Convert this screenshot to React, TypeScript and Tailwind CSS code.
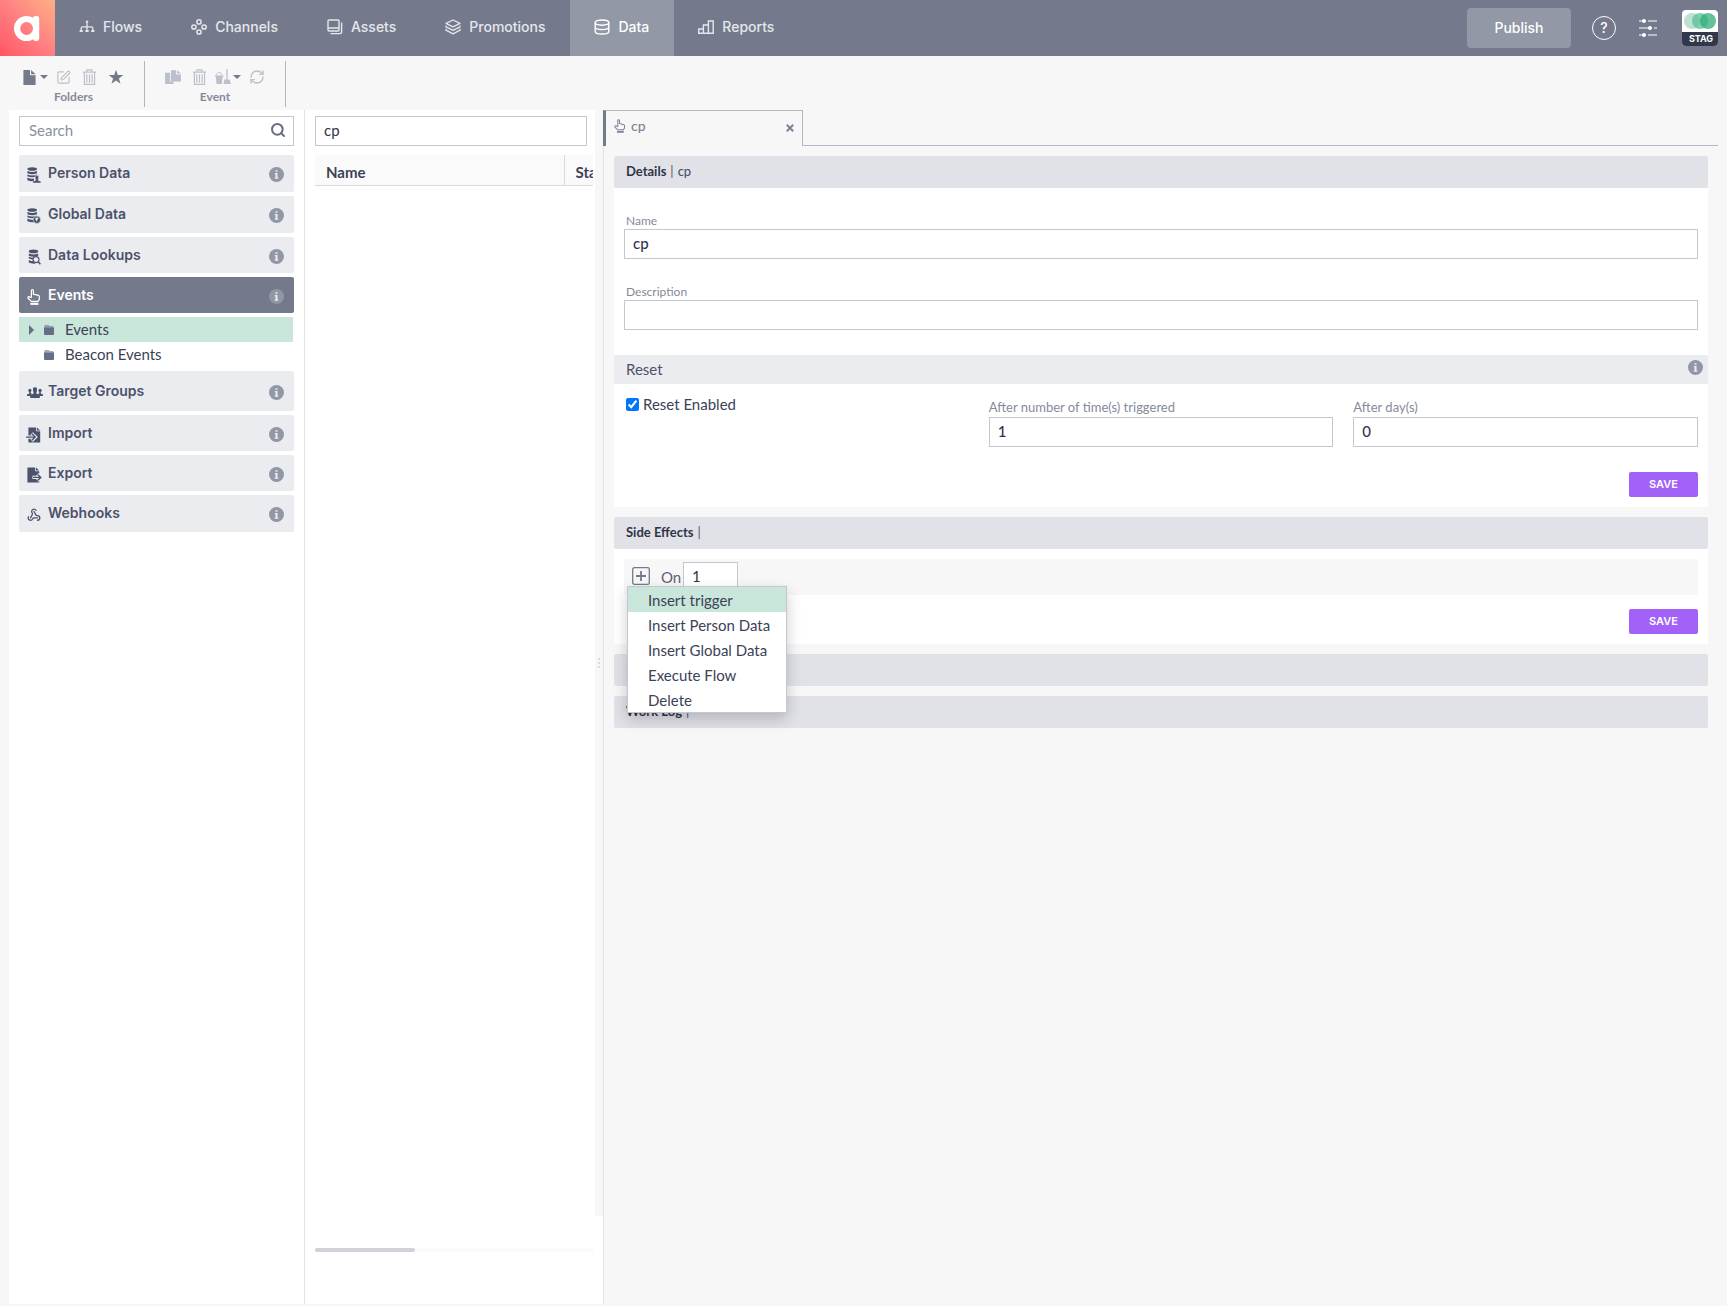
import { useState } from 'react';
import type { ReactNode } from 'react';
import { RefreshCw, Search, SquarePen, Webhook } from 'lucide-react';

type IconProps = { className?: string };

function FlowsIcon() {
  return (
    <svg className="size-4" viewBox="0 0 16 16" fill="none" stroke="currentColor" strokeWidth="1.3">
      <path d="M8 3v9M2.2 11.6V9q0-1.2 1.2-1.2h9.2q1.2 0 1.2 1.2v2.6" />
      <path d="M6.8 2.6h2.4M.6 12h3.2M6.4 12h3.2M12.2 12h3.2" strokeWidth="1.8" />
    </svg>
  );
}

function ChannelsIcon() {
  return (
    <svg className="size-4" viewBox="0 0 16 16" fill="none" stroke="currentColor" strokeWidth="1.5">
      <circle cx="8" cy="2.9" r="2.1" />
      <circle cx="8" cy="13" r="2.1" />
      <circle cx="2.9" cy="8" r="2.1" />
      <circle cx="13.1" cy="8" r="2.1" />
    </svg>
  );
}

function AssetsIcon() {
  return (
    <svg className="size-4" viewBox="0 0 16 16" fill="none" stroke="currentColor" strokeWidth="1.4">
      <rect x="1" y="1" width="11" height="11" rx="1" />
      <path d="M1 9h11M14.6 3.5v9.6q0 1.5-1.5 1.5H3.5" />
    </svg>
  );
}

function PromotionsIcon() {
  return (
    <svg className="size-4" viewBox="0 0 16 16" fill="none" stroke="currentColor" strokeWidth="1.3" strokeLinejoin="round">
      <path d="M8 1l7 3.4-7 3.4-7-3.4z" />
      <path d="M1 6.4v1.4l7 3.5 7-3.5V6.4M1 9.8v1.4l7 3.6 7-3.6V9.8" />
    </svg>
  );
}

function DataIcon() {
  return (
    <svg className="size-4" viewBox="0 0 16 16" fill="none" stroke="currentColor" strokeWidth="1.4">
      <ellipse cx="8" cy="3.6" rx="6.8" ry="2.6" />
      <path d="M1.2 3.6v8.8c0 1.4 3 2.6 6.8 2.6s6.8-1.2 6.8-2.6V3.6M1.2 8C1.2 9.4 4.2 10.6 8 10.6s6.8-1.2 6.8-2.6" />
    </svg>
  );
}

function ReportsIcon() {
  return (
    <svg className="size-4" viewBox="0 0 16 16" fill="none" stroke="currentColor" strokeWidth="1.4">
      <path d="M.8 14V10h4.6v4M5.4 14V6h5v8M10.4 14V2h4.8v12M0 14.2h16" />
    </svg>
  );
}

function FileIcon({ className }: IconProps) {
  return (
    <svg className={className} viewBox="0 0 13 16" fill="currentColor">
      <path d="M0 0h7v5.5h6V16H0zM8.2 0L13 4.4H8.2z" />
    </svg>
  );
}

function TrashIcon({ className }: IconProps) {
  return (
    <svg className={className} viewBox="0 0 13 16" fill="none" stroke="currentColor" strokeWidth="1.2">
      <path d="M0 3.2h13M4 3V.8h5V3M1.4 3.4v11.9h10.2V3.4M3.8 5.2v8.6M6.5 5.2v8.6M9.2 5.2v8.6" />
    </svg>
  );
}

function StarIcon({ className }: IconProps) {
  return (
    <svg className={className} viewBox="0 0 16 16" fill="currentColor">
      <path d="M8 .8l1.8 5.3h5.5l-4.4 3.3 1.6 5.4L8 11.6l-4.5 3.2 1.6-5.4L.7 6.1h5.5z" />
    </svg>
  );
}

function CopyIcon({ className }: IconProps) {
  return (
    <svg className={className} viewBox="0 0 16 16" fill="currentColor">
      <path d="M0 3.8h5.2v8.8h3.4V15H0z" />
      <path d="M6 1.2h5.2v4.2H16v7H6zM12.2 1.2L16 4.6h-3.8z" />
    </svg>
  );
}

function CleanIcon({ className }: IconProps) {
  return (
    <svg className={className} viewBox="0 0 16 16" fill="currentColor">
      <path d="M0 6.4h8.4v1.4h-.7L6.8 15H1.6L.7 7.8H0zM11.3 0h1.3v10.4h-1.3zM9.4 10.6h5.2L16 15H8.4z" />
      <path d="M1.4 6.4C1.6 2.6 6.8 2.6 7 6.4" fill="none" stroke="currentColor" />
    </svg>
  );
}

function Caret() {
  return (
    <svg className="h-1 w-2" viewBox="0 0 8 4" fill="currentColor">
      <path d="M0 0h8L4 4z" />
    </svg>
  );
}

function PointerIcon({ className }: IconProps) {
  return (
    <svg className={className} viewBox="0 0 14 16" fill="none" stroke="currentColor" strokeWidth="1.2" strokeLinejoin="round">
      <path d="M4.4 8.8V1.5q0-.9 1-.9t1 .9v3.7l5 1.2q.9.3.9 1.2v2.8l-1.3 2H4.4L1 9.2Q.6 7.8 2 7.6l2.4 1.2" />
      <path d="M3.4 14.8h8" strokeWidth="2.2" />
    </svg>
  );
}

function DbLayers() {
  return (
    <>
      <ellipse cx="5.2" cy="2" rx="4.8" ry="1.8" />
      <path d="M.4 4.1q4.8 2 9.6 0v2.2q-4.8 2-9.6 0zM.4 7.4q4.8 2 9.6 0v1.8q-4.8 2-9.6 0zM.4 10.6q3.4 1.8 6.6 1v2.6q-3.6.4-6.6-1z" />
    </>
  );
}

function PersonDataIcon() {
  return (
    <svg className="h-4 w-[14px]" viewBox="0 0 14 16" fill="currentColor">
      <DbLayers />
      <path d="M8.2 8.6h3.4v3.2l-.6 1.4 3 1.2V16H5.8v-1.6l3-1.2-.6-1.4z" stroke="#ebecf0" strokeWidth=".5" />
    </svg>
  );
}

function GlobalDataIcon() {
  return (
    <svg className="h-4 w-[14px]" viewBox="0 0 14 16" fill="currentColor">
      <DbLayers />
      <circle cx="9.9" cy="11.7" r="3.7" stroke="#ebecf0" strokeWidth=".6" />
      <path d="M8.2 10.2l2-1 1.4 1.6-1.4 1-.2 2-1.2-1.6z" fill="#ebecf0" />
    </svg>
  );
}

function LookupIcon() {
  return (
    <svg className="h-4 w-[14px]" viewBox="0 0 14 16" fill="currentColor">
      <g transform="translate(1.4 .4) scale(.98 1)">
        <DbLayers />
      </g>
      <circle cx="9" cy="10.6" r="3" fill="#ebecf0" stroke="currentColor" strokeWidth="1.1" />
      <path d="M11.2 12.8l2.2 2.4" stroke="currentColor" strokeWidth="1.6" />
    </svg>
  );
}

function GroupsIcon() {
  return (
    <svg className="h-[11px] w-4" viewBox="0 0 16 11" fill="currentColor">
      <circle cx="2.9" cy="3.4" r="1.6" />
      <circle cx="13.1" cy="3.4" r="1.6" />
      <path d="M0 9V7.4l2.2-1V4.6h1.6v1.8l1.4.4L3.8 9zM16 9V7.4l-2.2-1V4.6h-1.6v1.8l-1.4.4L12.2 9z" />
      <path d="M6 1.6Q6.2.2 8 .2t2 1.4v2.2L9.4 5.6v1l3.4 1.8V11H3.2V8.4l3.4-1.8v-1L6 3.8z" />
    </svg>
  );
}

function ImportIcon() {
  return (
    <svg className="-ml-px h-4 w-[15px]" viewBox="0 0 15 16" fill="currentColor">
      <path d="M2.4.4h7.8v3.8h4v11.4H2.4zM11 .4l3.2 3.2H11z" />
      <path d="M0 10.1h8M5.6 6.4l3.8 3.7-3.8 3.7" fill="none" stroke="#ebecf0" strokeWidth="3.4" />
      <path d="M0 10.1h8.6M5.6 6.6l3.6 3.5-3.6 3.5" fill="none" stroke="currentColor" strokeWidth="1.4" />
    </svg>
  );
}

function ExportIcon() {
  return (
    <svg className="h-4 w-[15px]" viewBox="0 0 15 16" fill="currentColor">
      <path d="M.4.4h7.8v3.8h4v11.4H.4zM9 .4l3.2 3.2H9z" />
      <path d="M5.4 10.4h8M10.4 7.2l3.4 3.2-3.4 3.2" fill="none" stroke="#ebecf0" strokeWidth="3.4" />
      <path d="M6 10.4h7.4M10.6 7.4l3.2 3-3.2 3" fill="none" stroke="currentColor" strokeWidth="1.4" />
    </svg>
  );
}

function InfoIcon({ className }: IconProps) {
  return (
    <svg className={`size-[15px] shrink-0 ${className ?? ''}`} viewBox="0 0 15 15" fill="#9297a6">
      <circle cx="7.5" cy="7.5" r="7.5" />
      <path d="M6.5 3.2h2v1.6h-2zM5.8 6h2.7v4.6h.8v1.2H5.7v-1.2h.8V7.2h-.7z" fill="#ebecf0" />
    </svg>
  );
}

function FolderIcon() {
  return (
    <svg className="h-[10px] w-[10px]" viewBox="0 0 10 10" fill="#666d86">
      <path d="M1 0h3.6l1 1h3.6v1H0z" opacity=".6" />
      <path d="M0 2.2h10V9q0 1-1 1H1q-1 0-1-1z" />
    </svg>
  );
}

const navItems = [
  { label: 'Flows', icon: <FlowsIcon /> },
  { label: 'Channels', icon: <ChannelsIcon /> },
  { label: 'Assets', icon: <AssetsIcon /> },
  { label: 'Promotions', icon: <PromotionsIcon /> },
  { label: 'Data', icon: <DataIcon /> },
  { label: 'Reports', icon: <ReportsIcon /> },
];

const menuItems = ['Insert trigger', 'Insert Person Data', 'Insert Global Data', 'Execute Flow', 'Delete'];

const fieldClass = 'h-[30px] w-full border border-[#c5c6d2] bg-white px-2 pb-[2px] text-[15px] text-[#2f3547] outline-none focus:border-[#757a8c]';

function TopNav() {
  return (
    <header className="flex h-14 items-stretch bg-[#747a8c] font-['Inter',sans-serif]">
      <a href="#home" aria-label="Home" className="w-[55px] shrink-0 bg-linear-to-tr from-[#ff5563] via-[#ff7f82] to-[#fbb086]">
        <svg className="h-14 w-[55px]" viewBox="0 0 55 56" fill="none">
          <circle cx="26.6" cy="28.5" r="9.5" stroke="#fff" strokeWidth="6.2" />
          <rect x="33" y="16" width="6.2" height="25" rx="2.4" fill="#fff" />
        </svg>
      </a>
      <nav className="flex">
        {navItems.map((item) => (
          <a
            key={item.label}
            href={`#${item.label.toLowerCase()}`}
            className={`flex items-center gap-2 pr-[25px] pb-[2px] pl-6 text-sm font-medium ${item.label === 'Data' ? 'bg-[#9298a6] text-white' : 'text-[#e6e7ec]'}`}
          >
            {item.icon}
            {item.label}
          </a>
        ))}
      </nav>
      <div className="ml-auto flex items-center pr-[9px]">
        <button className="h-10 w-26 rounded-sm bg-[#9298a6] pb-px text-sm font-medium text-white">Publish</button>
        <button aria-label="Help" className="ml-[21px] flex size-6 items-center justify-center rounded-full border border-white text-sm font-medium text-white">
          ?
        </button>
        <button aria-label="Settings" className="ml-[22px] text-white">
          <svg className="size-5" viewBox="0 0 20 20" fill="currentColor">
            <path d="M1 3h5M10 3h9M1 10h10M16 10h3M1 17h5M10 17h9" stroke="currentColor" strokeWidth="1.2" />
            <circle cx="6" cy="3" r="2" />
            <circle cx="12" cy="10" r="2" />
            <circle cx="6" cy="17" r="2" />
          </svg>
        </button>
        <div className="ml-6 w-9 overflow-hidden rounded-sm bg-white">
          <svg className="h-[22px] w-9" viewBox="0 0 36 22">
            <circle cx="10" cy="11" r="8" fill="#bfe0d3" />
            <circle cx="18" cy="11" r="8" fill="#57bf97" opacity=".75" />
            <circle cx="26" cy="11" r="8" fill="#2fac7a" opacity=".75" />
          </svg>
          <p className="h-[14px] bg-[#323849] pl-[2px] text-center text-[9px] leading-[14px] font-bold text-white">STAG</p>
        </div>
      </div>
    </header>
  );
}

function ToolGroup({ label, children }: { label: string; children: ReactNode }) {
  return (
    <div className="flex h-[46px] flex-col items-center border-r border-[#b3b7c4] px-5 pt-2">
      <div className="flex h-4 items-center text-[#bcc0ca]">{children}</div>
      <p className="mt-1 text-xs leading-4 font-bold text-[#858a9b]">{label}</p>
    </div>
  );
}

function Toolbar() {
  return (
    <div className="flex h-[54px] pt-[5px] pl-[3px]">
      <ToolGroup label="Folders">
        <button aria-label="New folder" className="flex items-center gap-1 text-[#747a8c]">
          <FileIcon className="h-[15px] w-[13px]" />
          <Caret />
        </button>
        <button aria-label="Rename folder" className="ml-2"><SquarePen size={15} strokeWidth={1.8} /></button>
        <button aria-label="Delete folder" className="ml-3"><TrashIcon className="h-4 w-[13px]" /></button>
        <button aria-label="Favourite" className="ml-3 text-[#747a8c]"><StarIcon className="size-4" /></button>
      </ToolGroup>
      <ToolGroup label="Event">
        <button aria-label="Duplicate event"><CopyIcon className="size-4" /></button>
        <button aria-label="Delete event" className="ml-3"><TrashIcon className="h-4 w-[13px]" /></button>
        <button aria-label="Clean up" className="ml-[9px] flex items-center gap-[2px]">
          <CleanIcon className="size-4" />
          <span className="text-[#747a8c]"><Caret /></span>
        </button>
        <button aria-label="Refresh" className="ml-2"><RefreshCw size={16} strokeWidth={2} /></button>
      </ToolGroup>
    </div>
  );
}

function SideItem({ label, icon, height, active }: { label: string; icon: ReactNode; height: string; active?: boolean }) {
  return (
    <button
      className={`flex w-full items-center rounded-xs pr-[10px] pb-px pl-2 font-['Inter',sans-serif] text-sm ${height} ${active ? 'bg-[#747a8c] text-white' : 'bg-[#ebecf0] text-[#4b526a]'}`}
    >
      <span className="flex w-[21px] items-center pt-1">{icon}</span>
      <span className="font-semibold">{label}</span>
      <InfoIcon className="mt-[3px] ml-auto" />
    </button>
  );
}

function Sidebar() {
  return (
    <aside className="w-74 shrink-0 border-r border-[#e2e3e7] bg-white px-[10px] pt-[6px]">
      <div className="flex h-[30px] items-center border border-[#c5c6d2] pr-[7px] pb-[2px]">
        <input aria-label="Search" placeholder="Search" className="h-full min-w-0 flex-1 px-[9px] text-[15px] outline-none placeholder:text-[#8b90a0]" />
        <button aria-label="Run search" className="text-[#666d86]"><Search size={16} strokeWidth={3} /></button>
      </div>
      <div className="mt-[9px] flex flex-col gap-1">
        <SideItem label="Person Data" icon={<PersonDataIcon />} height="h-[37px]" />
        <SideItem label="Global Data" icon={<GlobalDataIcon />} height="h-[37px]" />
        <SideItem label="Data Lookups" icon={<LookupIcon />} height="h-9" />
        <SideItem label="Events" icon={<PointerIcon className="h-4 w-[14px]" />} height="h-9" active />
        <ul className="text-[15px] leading-[25px] text-[#3c4257]">
          <li className="mr-px flex h-[25px] items-center bg-[#c9e6da] pl-[10px]">
            <svg className="h-[10px] w-[5px]" viewBox="0 0 5 10" fill="#666d86"><path d="M0 0l5 5-5 5z" /></svg>
            <a href="#events" className="ml-[10px] flex items-center gap-[11px]"><FolderIcon />Events</a>
          </li>
          <li className="flex h-[25px] items-center pl-[25px]">
            <a href="#beacon" className="flex items-center gap-[11px]"><FolderIcon />Beacon Events</a>
          </li>
        </ul>
        <SideItem label="Target Groups" icon={<GroupsIcon />} height="h-10" />
        <SideItem label="Import" icon={<ImportIcon />} height="h-9" />
        <SideItem label="Export" icon={<ExportIcon />} height="h-9" />
        <SideItem label="Webhooks" icon={<Webhook size={14} strokeWidth={2.2} />} height="h-[37px]" />
      </div>
    </aside>
  );
}

function EventList() {
  return (
    <section className="flex w-[298px] shrink-0 bg-white">
      <div className="flex min-w-0 flex-1 flex-col pt-[6px] pr-[2px] pl-[10px]">
        <div className="pr-[6px]">
          <input aria-label="Filter events" defaultValue="cp" className={fieldClass} />
        </div>
        <div className="mt-[9px] flex-1 overflow-hidden">
          <table className="w-[420px] table-fixed text-left text-[15px] text-[#3c4257]">
            <thead>
              <tr className="h-[30px] border-b border-[#d9dade] bg-[#fafafa]">
                <th className="w-[249px] border-r border-[#d9dade] pt-1 pl-[11px] leading-5 font-bold">Name</th>
                <th className="pt-1 pl-[11px] leading-5 font-bold">Status</th>
              </tr>
            </thead>
          </table>
        </div>
        <div className="mb-[52px] h-1 bg-[#fafafc]">
          <div className="h-1 w-25 rounded-full bg-[#cfd2d9]" />
        </div>
      </div>
      <div className="mb-[88px] flex w-2 flex-col items-center justify-center gap-[2px] bg-[#f7f7f7]">
        <span className="size-[2px] bg-[#d9dade]" />
        <span className="size-[2px] bg-[#d9dade]" />
        <span className="size-[2px] bg-[#d9dade]" />
      </div>
    </section>
  );
}

function PanelHeader({ title, value }: { title?: string; value?: string }) {
  return (
    <h2 className="flex h-8 items-center gap-1 rounded-xs bg-[#e1e2e8] px-3 text-[13px] text-[#4b526a]">
      {title && <span className="font-bold text-[#2f3547]">{title}</span>}
      <span>|</span>
      {value && <span className="font-medium">{value}</span>}
    </h2>
  );
}

function SaveButton() {
  return (
    <button className="h-[25px] w-[69px] rounded-xs bg-[#a262f7] font-['Inter',sans-serif] text-[11px] font-semibold text-white hover:bg-[#9150ea]">
      SAVE
    </button>
  );
}

function Field({ id, label, value, labelClass }: { id: string; label: string; value?: string; labelClass: string }) {
  return (
    <div>
      <label htmlFor={id} className={`block h-[18px] text-[#858a9b] ${labelClass}`}>{label}</label>
      <input id={id} defaultValue={value} className={`${fieldClass} font-medium`} />
    </div>
  );
}

function EventEditor() {
  const [menuOpen, setMenuOpen] = useState(true);
  const [resetEnabled, setResetEnabled] = useState(true);

  return (
    <section className="flex min-w-0 flex-1 flex-col">
      <div className="mr-[9px] flex h-9">
        <div className="flex w-50 items-center border-t border-r border-l-3 border-[#b3b7c4] border-l-[#747a8c] px-2 pb-[6px] text-[#7d8396]">
          <PointerIcon className="h-[14px] w-3" />
          <span className="ml-[5px] text-sm font-medium">cp</span>
          <button aria-label="Close tab" className="mt-1 ml-auto">
            <svg className="size-2" viewBox="0 0 8 8" stroke="currentColor" strokeWidth="2"><path d="M.8.8l6.4 6.4M7.2.8L.8 7.2" /></svg>
          </button>
        </div>
        <div className="flex-1 border-b border-[#b3b7c4]" />
      </div>

      <div className="flex flex-1 flex-col gap-[10px] border-l border-[#e2e3e7] pt-[10px] pr-[19px] pl-[10px]">
        <div className="bg-white">
          <PanelHeader title="Details" value="cp" />
          <div className="flex flex-col gap-[23px] px-[10px] pt-[23px] pb-[25px]">
            <Field id="event-name" label="Name" value="cp" labelClass="pl-[2px] text-xs leading-5" />
            <Field id="event-description" label="Description" labelClass="pl-[2px] text-xs leading-5" />
          </div>
          <div className="flex h-[29px] items-center justify-between bg-[#ebecf0] pr-[5px] pl-3">
            <h3 className="text-[15px] text-[#4b526a]">Reset</h3>
            <InfoIcon className="mb-1" />
          </div>
          <div className="p-[10px]">
            <div className="grid grid-cols-3 gap-5">
              <label className="flex h-5 items-center gap-1 pl-[2px] text-[15px] text-[#3c4257]">
                <input
                  type="checkbox"
                  checked={resetEnabled}
                  onChange={(event) => setResetEnabled(event.target.checked)}
                  className="size-[13px] accent-[#0075ff]"
                />
                Reset Enabled
              </label>
              <div className="pt-[5px]">
                <Field id="reset-times" label="After number of time(s) triggered" value="1" labelClass="text-[13px] leading-4" />
              </div>
              <div className="pt-[5px]">
                <Field id="reset-days" label="After day(s)" value="0" labelClass="text-[13px] leading-4" />
              </div>
            </div>
            <div className="mt-[25px] flex justify-end"><SaveButton /></div>
          </div>
        </div>

        <div className="bg-white">
          <PanelHeader title="Side Effects" />
          <div className="p-[10px]">
            <div className="relative flex h-9 items-center bg-[#f7f7f7] pl-2">
              <button aria-label="Add side effect" aria-expanded={menuOpen} onClick={() => setMenuOpen(!menuOpen)} className="mb-[2px] text-[#747a8c]">
                <svg className="size-[18px]" viewBox="0 0 18 18" fill="none" stroke="currentColor">
                  <rect x=".7" y=".7" width="16.6" height="16.6" rx="1.6" strokeWidth="1.3" />
                  <path d="M9 4v10M4 9h10" strokeWidth="1.8" />
                </svg>
              </button>
              <label htmlFor="on-count" className="ml-[11px] w-[22px] text-[15px] text-[#5b6176]">On</label>
              <div className="w-[55px]"><input id="on-count" defaultValue="1" className={fieldClass} /></div>
              {menuOpen && (
                <ul className="absolute top-[27px] left-[3px] z-10 w-40 border border-[#c5c6d2] bg-white text-[15px] text-[#3c4257] shadow-[0_6px_14px_rgba(0,0,0,0.2)]">
                  {menuItems.map((item, index) => (
                    <li key={item}>
                      <button
                        onClick={() => setMenuOpen(false)}
                        className={`block h-[25px] w-full pl-5 text-left leading-6 whitespace-nowrap hover:bg-[#c9e6da] ${index === 0 ? 'bg-[#c9e6da]' : ''}`}
                      >
                        {item}
                      </button>
                    </li>
                  ))}
                </ul>
              )}
            </div>
            <div className="mt-[14px] flex justify-end"><SaveButton /></div>
          </div>
        </div>

        <PanelHeader />
        <PanelHeader title="Work Log" />
      </div>
    </section>
  );
}

export default function App() {
  return (
    <div className="flex min-h-screen flex-col bg-[#f7f7f7] pb-[2px] font-['Lato',sans-serif]">
      <TopNav />
      <Toolbar />
      <main className="flex flex-1 pl-[9px]">
        <Sidebar />
        <EventList />
        <EventEditor />
      </main>
    </div>
  );
}
